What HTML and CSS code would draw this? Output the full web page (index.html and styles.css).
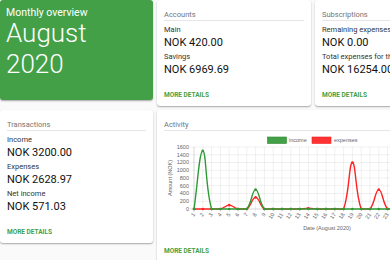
FILE: index.html
```html
<!DOCTYPE html>
<html lang="en">
<head>
  <meta charset="UTF-8">
  <meta name="viewport" content="width=device-width, initial-scale=1.0">
  <title>Budget dashboard</title>
  <link rel="stylesheet" href="styles.css">
  <script src="./chart.js" defer></script>
</head>
<body>
  <div class="dashboard">
    <div class="card card-month">
      <p class="month-caption">Monthly overview</p>
      <h1 class="month-name">August<br>2020</h1>
    </div>

    <div class="card">
      <div class="card-title">Accounts</div>
      <dl class="figures">
        <dt>Main</dt>
        <dd>NOK 420.00</dd>
        <dt>Savings</dt>
        <dd>NOK 6969.69</dd>
      </dl>
      <a class="more" href="#">More details</a>
    </div>

    <div class="card">
      <div class="card-title">Subscriptions</div>
      <dl class="figures">
        <dt>Remaining expenses this month</dt>
        <dd>NOK 0.00</dd>
        <dt>Total expenses for this month</dt>
        <dd>NOK 16254.00</dd>
      </dl>
      <a class="more" href="#">More details</a>
    </div>

    <div class="card">
      <div class="card-title">Transactions</div>
      <dl class="figures">
        <dt>Income</dt>
        <dd>NOK 3200.00</dd>
        <dt>Expenses</dt>
        <dd>NOK 2628.97</dd>
        <dt>Net income</dt>
        <dd>NOK 571.03</dd>
      </dl>
      <a class="more" href="#">More details</a>
    </div>

    <div class="card card-activity">
      <div class="card-title">Activity</div>
      <svg id="activity" class="activity-chart" width="298" height="99" viewBox="164 134 298 99"></svg>
      <a class="more more-chart" href="#">More details</a>
    </div>
  </div>
</body>
</html>
```

FILE: styles.css
```css
body {
  margin: 0;
  overflow: hidden;
  background: #fafafa;
  font-family: Roboto, "Liberation Sans", sans-serif;
}
.dashboard {
  display: grid;
  grid-template-columns: 153px 154px 154px;
  gap: 4px;
  align-items: start;
}
.card {
  background: #fff;
  border-radius: 3px;
  padding: 9px 7px 6px;
  box-shadow: 0 1px 2px rgba(0, 0, 0, .25), 0 1px 1px rgba(0, 0, 0, .1);
  overflow: hidden;
}
.card-month {
  height: 100px;
  box-sizing: border-box;
  padding: 6px 6px;
  background: #43a047;
  color: #fff;
}
.month-caption {
  margin: 0;
  font-size: 10.5px;
  line-height: 14px;
}
.month-name {
  margin: -2px 0 0;
  font-weight: 300;
  font-size: 26px;
  line-height: 31px;
}
.card-title {
  font-size: 7.5px;
  line-height: 11px;
  color: #757575;
  border-bottom: 1px solid #e6e6e6;
}
.figures {
  margin: 3px 0 0;
}
.figures dt {
  font-size: 7.5px;
  line-height: 11px;
  color: #333;
  white-space: nowrap;
}
.figures dd {
  margin: 0;
  font-size: 11px;
  line-height: 16px;
  color: #111;
  white-space: nowrap;
}
.more {
  display: block;
  margin-top: 12px;
  font-size: 6.5px;
  line-height: 10px;
  font-weight: 700;
  text-transform: uppercase;
  text-decoration: none;
  color: #43a047;
}
.card-activity {
  grid-column: span 2;
}
.activity-chart {
  display: block;
  margin-top: 3px;
  font-family: "Liberation Sans", Arial, sans-serif;
}
.more-chart {
  margin-top: 13px;
}
```

FILE: chart.js
```js
(function () {
  const svg = document.getElementById('activity')
  const NS = 'http://www.w3.org/2000/svg'

  const income = [0, 1500, 0, 0, 0, 0, 0, 500]
  const expenses = [0, 0, 0, 0, 100, 0, 0, 300, 0, 0, 0, 0, 0, 20, 0, 0, 0, 0, 1200, 0, 0, 500]
  while (income.length < 31) income.push(0)
  while (expenses.length < 31) expenses.push(0)

  const plotLeft = 194, step = 8.8, plotTop = 147, plotBottom = 209, max = 1600
  const plotRight = plotLeft + step * 30
  const px = d => plotLeft + step * d
  const py = v => plotBottom - (v / max) * (plotBottom - plotTop)

  function el(name, attrs, text) {
    const node = document.createElementNS(NS, name)
    for (const k in attrs) node.setAttribute(k, attrs[k])
    if (text !== undefined) node.textContent = text
    svg.appendChild(node)
    return node
  }

  // grid
  for (let v = 0; v <= max; v += 200) {
    const y = py(v)
    el('line', { x1: plotLeft - 4, x2: plotRight, y1: y, y2: y, stroke: v ? 'rgba(0,0,0,.1)' : 'rgba(0,0,0,.25)', 'stroke-width': .6 })
    el('text', { x: plotLeft - 5, y: y + 1.9, 'font-size': 5.5, fill: '#666', 'text-anchor': 'end' }, v)
  }
  for (let d = 0; d < 31; d++) {
    const x = px(d)
    el('line', { x1: x, x2: x, y1: plotTop, y2: plotBottom + 3, stroke: d ? 'rgba(0,0,0,.1)' : 'rgba(0,0,0,.25)', 'stroke-width': .6 })
    el('text', { 'font-size': 5.5, fill: '#666', 'text-anchor': 'end', transform: `translate(${x + 1.5} ${plotBottom + 5.5}) rotate(-55)` }, d + 1)
  }

  // axis titles
  el('text', { 'font-size': 5.5, fill: '#666', 'text-anchor': 'middle', transform: 'translate(172 178) rotate(-90)' }, 'Amount (NOK)')
  el('text', { x: 327, y: 229.5, 'font-size': 5.5, fill: '#666', 'text-anchor': 'middle' }, 'Date (August 2020)')

  // legend
  el('rect', { x: 267.5, y: 137, width: 19, height: 6.5, fill: '#43a047', stroke: '#2e8b32', 'stroke-width': .6 })
  el('text', { x: 289, y: 142.3, 'font-size': 5.5, fill: '#666' }, 'income')
  el('rect', { x: 312, y: 137, width: 19, height: 6.5, fill: '#f33', stroke: '#e22', 'stroke-width': .6 })
  el('text', { x: 334, y: 142.3, 'font-size': 5.5, fill: '#666' }, 'expenses')

  // curved lines, tension .4
  function curve(data, color) {
    const pts = data.map((v, i) => [px(i), py(v)])
    const clampY = y => Math.min(plotBottom, Math.max(plotTop, y))
    const cps = pts.map((p, i) => {
      const prev = pts[i - 1] || p, next = pts[i + 1] || p
      const d01 = Math.hypot(p[0] - prev[0], p[1] - prev[1])
      const d12 = Math.hypot(next[0] - p[0], next[1] - p[1])
      const sum = d01 + d12 || 1
      const fa = .4 * d01 / sum, fb = .4 * d12 / sum
      return {
        prev: [p[0] - fa * (next[0] - prev[0]), clampY(p[1] - fa * (next[1] - prev[1]))],
        next: [p[0] + fb * (next[0] - prev[0]), clampY(p[1] + fb * (next[1] - prev[1]))]
      }
    })
    let d = `M${pts[0][0]} ${pts[0][1]}`
    for (let i = 1; i < pts.length; i++) {
      const a = cps[i - 1].next, b = cps[i].prev
      d += ` C${a[0]} ${a[1]} ${b[0]} ${b[1]} ${pts[i][0]} ${pts[i][1]}`
    }
    el('path', { d, fill: 'none', stroke: color, 'stroke-width': 1.4 })
    pts.forEach(p => el('circle', { cx: p[0], cy: p[1], r: 1.3, fill: color }))
  }

  curve(expenses, '#f22')
  curve(income, '#2e9a35')
})()
```
